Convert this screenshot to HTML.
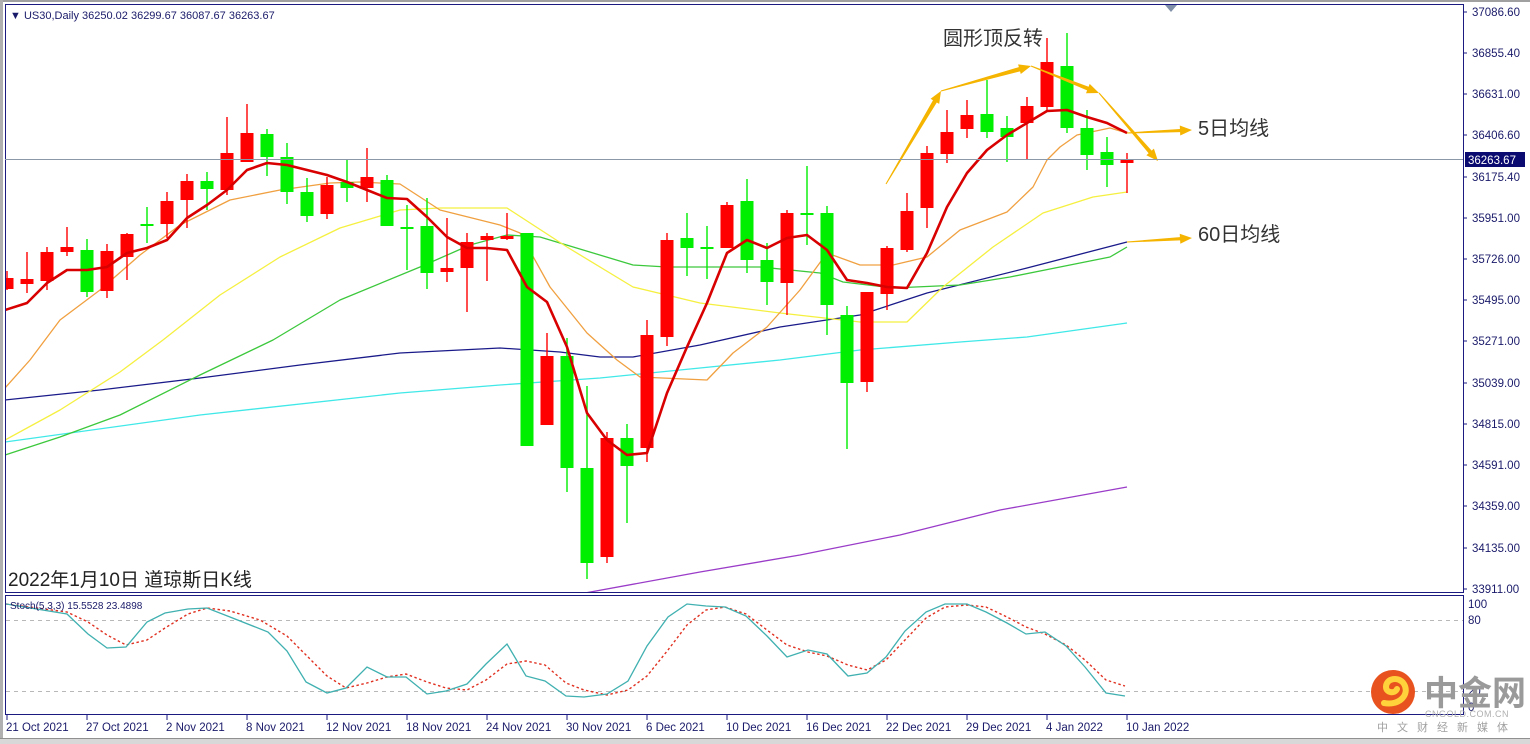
<!DOCTYPE html>
<html><head><meta charset="utf-8"><style>
html,body{margin:0;padding:0;background:#fff;width:1530px;height:744px;overflow:hidden}
svg{display:block}
.ax{font-family:"Liberation Sans",sans-serif;font-size:11.5px;fill:#1a1a6a}
.dt{font-family:"Liberation Sans",sans-serif;font-size:11.5px;fill:#1a1a6a}
.cn{font-family:"Liberation Sans","Noto Sans CJK SC",sans-serif}
</style></head><body>
<svg id="s" width="1530" height="744" viewBox="0 0 1530 744" xmlns="http://www.w3.org/2000/svg">
<rect x="0" y="0" width="1530" height="744" fill="#fff"/>
<rect x="0" y="0" width="1530" height="2" fill="#a0a0a0"/>
<rect x="0" y="0" width="3" height="744" fill="#b0b0b0"/>
<rect x="0" y="739" width="1530" height="5" fill="#d8d8d8"/>
<rect x="0" y="738" width="1530" height="1" fill="#909090"/>
<g id="main"></g>
<rect x="5.5" y="4.5" width="1458" height="588" fill="none" stroke="#1a1a80" stroke-width="1"/>
<rect x="5.5" y="595.5" width="1458" height="119" fill="none" stroke="#1a1a80" stroke-width="1"/>
<line x1="5" y1="159.5" x2="1463" y2="159.5" stroke="#8a98a8" stroke-width="1"/>
<polygon points="1165,5 1177,5 1171,12" fill="#8090a8"/>
<text x="10" y="19" class="ax" style="font-size:11px">▼  US30,Daily  36250.02 36299.67 36087.67 36263.67</text>
<g id="axis"></g>
<rect x="1465" y="152" width="60" height="15" fill="#0a0a70"/>
<text x="1468" y="164" class="ax" style="fill:#fff">36263.67</text>
<text x="943" y="45" class="cn" font-size="20" fill="#333">圆形顶反转</text>
<text x="1198" y="135" class="cn" font-size="20" fill="#333">5日均线</text>
<text x="1198" y="241" class="cn" font-size="20" fill="#333">60日均线</text>
<text x="8" y="586" class="cn" font-size="19" fill="#222">2022年1月10日 道琼斯日K线</text>
<text x="10" y="609" class="ax" style="font-size:10px">Stoch(5,3,3) 15.5528 23.4898</text>
<text x="1468" y="608" class="ax">100</text>
<text x="1468" y="624" class="ax">80</text>
<text x="1468" y="695" class="ax">20</text>
<text x="1468" y="711" class="ax">0</text>
<g id="dates"></g>
<circle cx="1393" cy="692" r="22" fill="#e8521e"/>
<path d="M1384,703 C1400,706 1410,694 1404,684 C1399,676 1386,678 1386,687 C1386,693 1395,694 1397,689" fill="none" stroke="#ffd23c" stroke-width="6" stroke-linecap="round"/>
<text x="1424" y="705" class="cn" font-size="34" font-weight="bold" fill="#9a9a9a">中金网</text>
<text x="1425" y="717" font-family="Liberation Sans,sans-serif" font-size="9" fill="#b0b0b0" letter-spacing="0.5">CNGOLD.COM.CN</text>
<text x="1377" y="731" class="cn" font-size="11" fill="#a0a0a0" letter-spacing="9">中文财经新媒体</text>
</svg>
<script>
var NS="http://www.w3.org/2000/svg";
function el(p,t,a){var e=document.createElementNS(NS,t);for(var k in a)e.setAttribute(k,a[k]);p.appendChild(e);return e;}
var m=document.getElementById("main");
var clip=el(m,"clipPath",{id:"c1"});el(clip,"rect",{x:6,y:5,width:1457,height:587});
var g=el(m,"g",{"clip-path":"url(#c1)"});
function pl(pts,col,w,extra){var a={points:pts.map(function(p){return p.join(",")}).join(" "),fill:"none",stroke:col,"stroke-width":w,"stroke-linejoin":"round"};for(var k in extra)a[k]=extra[k];el(g,"polyline",a);}
pl([[585,593],[700,572],[800,555],[900,535],[1000,510],[1127,487]],"#9a3cc8",1.3);
pl([[5,442],[200,415],[400,393],[500,385],[600,378],[700,368],[780,360],[860,350],[960,342],[1027,337],[1127,323]],"#40e8e8",1.3);
pl([[5,400],[100,390],[200,378],[300,365],[400,353],[500,348],[560,352],[600,357],[633,357],[700,345],[780,327],[860,315],[927,293],[1027,268],[1127,242]],"#1a1a8a",1.3);
pl([[5,455],[60,437],[120,415],[200,375],[273,340],[340,300],[420,267],[470,245],[507,235],[540,237],[633,265],[667,267],[760,267],[820,273],[843,282],[893,288],[960,285],[1010,277],[1060,267],[1110,257],[1127,247]],"#3cc83c",1.3);
pl([[5,440],[60,410],[120,372],[163,340],[220,295],[280,257],[340,228],[400,210],[440,208],[507,208],[567,247],[633,287],[700,303],[780,313],[860,322],[907,322],[943,287],[993,247],[1043,213],[1093,197],[1127,192]],"#f5f040",1.3);
pl([[5,388],[30,360],[60,320],[100,290],[140,255],[180,225],[230,200],[280,190],[330,183],[360,182],[400,184],[440,210],[500,225],[520,233],[550,287],[587,333],[617,360],[640,377],[707,380],[733,353],[767,327],[800,290],[827,253],[860,265],[893,265],[927,257],[960,230],[1007,212],[1033,187],[1047,160],[1060,147],[1077,135],[1110,128],[1127,133]],"#f0a040",1.3);
var C=[["r",278,289,271,290],["r",279,284,252,293],["r",252,281,247,290],["r",247,252,227,256],["g",250,292,239,297],["r",251,291,244,298],["r",234,257,233,280],["g",225,225,207,243],["r",201,224,192,238],["r",181,200,174,228],["g",181,189,172,210],["r",153,190,117,195],["r",133,162,104,162],["g",134,157,129,176],["g",157,192,143,204],["g",192,216,178,222],["r",185,214,177,219],["g",182,188,160,202],["r",177,188,148,202],["g",180,226,175,226],["g",228,228,205,270],["g",226,273,198,289],["r",268,272,218,282],["r",242,268,233,312],["r",236,240,233,281],["r",236,239,213,240],["g",233,446,233,446],["r",356,425,333,425],["g",356,468,338,492],["g",468,563,386,579],["r",438,557,432,563],["g",438,466,424,523],["r",335,448,320,462],["r",240,337,233,346],["g",238,248,213,276],["g",248,248,226,279],["r",205,248,202,248],["g",201,260,179,273],["g",260,282,243,305],["r",213,283,210,315],["g",214,214,166,245],["g",213,305,206,335],["g",315,383,306,449],["r",292,382,292,392],["r",248,294,246,310],["r",211,250,193,252],["r",153,208,146,228],["r",132,154,110,163],["r",115,129,100,138],["g",114,132,80,138],["g",128,137,116,162],["r",106,123,97,160],["r",62,107,38,110],["g",66,128,33,133],["g",128,155,110,170],["g",152,165,137,187],["r",160,163,153,193]];
C.forEach(function(c,i){var x=7+20*i,col=c[0]=="r"?"#ff0000":"#00ee00";
el(g,"line",{x1:x,y1:c[3],x2:x,y2:c[4],stroke:col,"stroke-width":1.4});
var h=Math.max(c[2]-c[1],2);el(g,"rect",{x:x-6.5,y:c[2]-c[1]<2?c[1]-1:c[1],width:13,height:h,fill:col});});
pl([[5,310],[27,303],[47,283],[67,270],[87,270],[107,267],[127,253],[147,248],[167,240],[187,218],[207,205],[227,190],[247,170],[267,163],[287,165],[307,170],[327,175],[347,182],[367,190],[387,198],[407,199],[427,217],[447,237],[467,248],[487,248],[507,250],[527,287],[547,302],[567,347],[587,413],[607,440],[627,455],[647,453],[667,393],[687,347],[707,303],[727,253],[747,240],[767,248],[787,238],[807,235],[827,250],[847,280],[867,283],[887,287],[907,288],[927,253],[947,207],[967,173],[987,150],[1007,135],[1027,123],[1047,111],[1067,110],[1087,117],[1107,123],[1127,133]],"#d80000",2.6);
var o="#f5b400";
function arr(x1,y1,x2,y2,w){var dx=x2-x1,dy=y2-y1,L=Math.sqrt(dx*dx+dy*dy),ux=dx/L,uy=dy/L,nx=-uy,ny=ux,hl=12,hw=5;
var bx=x2-ux*hl,by=y2-uy*hl;
el(m,"polygon",{points:[x1+nx*0.5,y1+ny*0.5,bx+nx*w,by+ny*w,bx+nx*hw,by+ny*hw,x2,y2,bx-nx*hw,by-ny*hw,bx-nx*w,by-ny*w,x1-nx*0.5,y1-ny*0.5].join(","),fill:o});}
arr(886,184,941,91,2.2);arr(941,91,1031,66,2.2);arr(1031,66,1099,93,2);arr(1099,93,1158,161,2);
arr(1127,133,1192,130,1.6);arr(1127,242,1192,238,1.6);
var sc=el(m,"clipPath",{id:"c2"});el(sc,"rect",{x:6,y:596,width:1457,height:118});
var sg=el(m,"g",{"clip-path":"url(#c2)"});
el(sg,"line",{x1:6,y1:620.5,x2:1463,y2:620.5,stroke:"#b8b8b8","stroke-dasharray":"4,4"});
el(sg,"line",{x1:6,y1:691.5,x2:1463,y2:691.5,stroke:"#b8b8b8","stroke-dasharray":"4,4"});
function spl(pts,col,w,d){var a={points:pts.map(function(p){return p.join(",")}).join(" "),fill:"none",stroke:col,"stroke-width":w};if(d)a["stroke-dasharray"]=d;el(sg,"polyline",a);}
spl([[6,604],[67,612],[88,622],[107,635],[126,645],[147,640],[165,628],[188,614],[207,608],[230,611],[260,620],[287,636],[306,655],[327,676],[346,688],[367,683],[387,677],[406,674],[427,682],[446,688],[467,690],[486,680],[507,664],[526,661],[545,665],[566,683],[584,690],[607,695],[628,690],[647,676],[668,650],[687,625],[706,610],[725,607],[746,614],[767,630],[787,645],[808,652],[827,656],[848,665],[867,670],[886,660],[905,640],[926,618],[945,607],[967,605],[986,607],[1007,617],[1026,627],[1045,634],[1066,645],[1085,660],[1106,680],[1125,686]],"#e03020",1.4,"2.5,2.5");
spl([[6,604],[67,614],[88,634],[107,648],[126,647],[147,622],[165,613],[188,609],[207,608],[230,617],[268,632],[287,651],[306,682],[327,693],[346,688],[367,667],[387,677],[406,677],[427,694],[446,691],[467,684],[486,664],[507,644],[526,676],[545,681],[566,696],[584,697],[607,694],[628,681],[647,646],[668,617],[687,604],[706,606],[725,607],[746,616],[767,636],[787,657],[808,650],[827,654],[848,676],[867,673],[886,657],[905,631],[926,612],[945,604],[967,604],[986,612],[1007,623],[1026,634],[1045,632],[1066,646],[1085,667],[1106,693],[1125,696]],"#40b0b0",1.3);
var ax=document.getElementById("axis");
var L=[["37086.60",12],["36855.40",53],["36631.00",94],["36406.60",135],["36175.40",177],["35951.00",218],["35726.00",259],["35495.00",300],["35271.00",341],["35039.00",383],["34815.00",424],["34591.00",465],["34359.00",506],["34135.00",548],["33911.00",589]];
L.forEach(function(l){el(ax,"line",{x1:1463,y1:l[1],x2:1467,y2:l[1],stroke:"#1a1a80"});var t=el(ax,"text",{x:1472,y:l[1]+4,"class":"ax"});t.textContent=l[0];});
var D=["21 Oct 2021","27 Oct 2021","2 Nov 2021","8 Nov 2021","12 Nov 2021","18 Nov 2021","24 Nov 2021","30 Nov 2021","6 Dec 2021","10 Dec 2021","16 Dec 2021","22 Dec 2021","29 Dec 2021","4 Jan 2022","10 Jan 2022"];
var dg=document.getElementById("dates");
D.forEach(function(d,i){var x=7+80*i;el(dg,"line",{x1:x,y1:715,x2:x,y2:720,stroke:"#1a1a80"});var t=el(dg,"text",{x:x-1,y:731,"class":"dt"});t.textContent=d;});
</script>
</body></html>
